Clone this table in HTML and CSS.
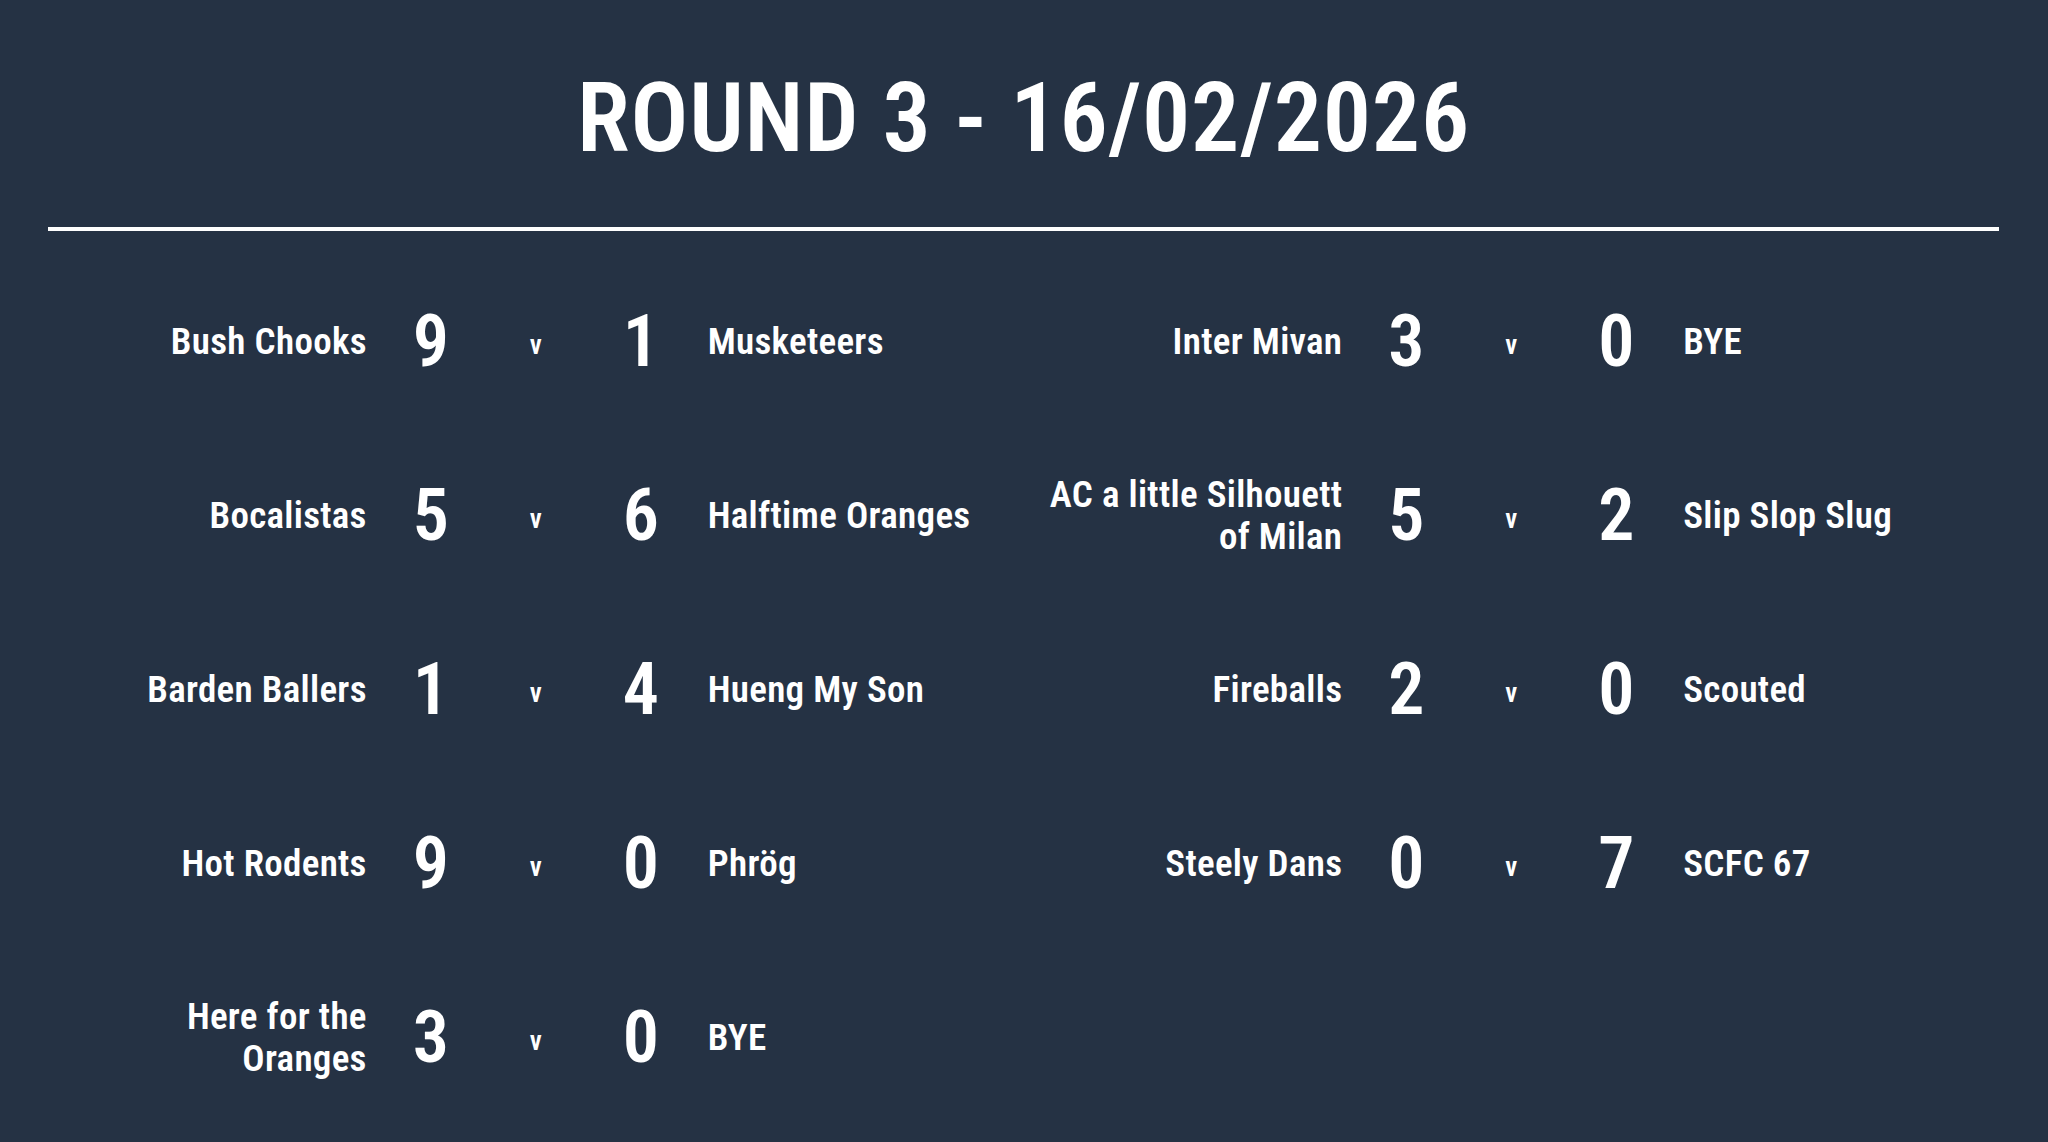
FILE: index.html
```html
<!DOCTYPE html>
<html lang="en">
<head>
<meta charset="utf-8">
<title>Round 3 - 16/02/2026</title>
<link rel="stylesheet" href="styles.css">
</head>
<body>
<main class="board">
  <h1 class="title">ROUND 3 - 16/02/2026</h1>
  <hr class="rule">
  <section class="fixtures">
    <div class="column">
      <div class="match">
        <div class="team home">Bush Chooks</div>
        <div class="score">9</div>
        <div class="vs">v</div>
        <div class="score">1</div>
        <div class="team away">Musketeers</div>
      </div>
      <div class="match">
        <div class="team home">Bocalistas</div>
        <div class="score">5</div>
        <div class="vs">v</div>
        <div class="score">6</div>
        <div class="team away">Halftime Oranges</div>
      </div>
      <div class="match">
        <div class="team home">Barden Ballers</div>
        <div class="score">1</div>
        <div class="vs">v</div>
        <div class="score">4</div>
        <div class="team away">Hueng My Son</div>
      </div>
      <div class="match">
        <div class="team home">Hot Rodents</div>
        <div class="score">9</div>
        <div class="vs">v</div>
        <div class="score">0</div>
        <div class="team away">Phrög</div>
      </div>
      <div class="match">
        <div class="team home">Here for the<br>Oranges</div>
        <div class="score">3</div>
        <div class="vs">v</div>
        <div class="score">0</div>
        <div class="team away">BYE</div>
      </div>
    </div>
    <div class="column">
      <div class="match">
        <div class="team home">Inter Mivan</div>
        <div class="score">3</div>
        <div class="vs">v</div>
        <div class="score">0</div>
        <div class="team away">BYE</div>
      </div>
      <div class="match">
        <div class="team home">AC a little Silhouett<br>of Milan</div>
        <div class="score">5</div>
        <div class="vs">v</div>
        <div class="score">2</div>
        <div class="team away">Slip Slop Slug</div>
      </div>
      <div class="match">
        <div class="team home">Fireballs</div>
        <div class="score">2</div>
        <div class="vs">v</div>
        <div class="score">0</div>
        <div class="team away">Scouted</div>
      </div>
      <div class="match">
        <div class="team home">Steely Dans</div>
        <div class="score">0</div>
        <div class="vs">v</div>
        <div class="score">7</div>
        <div class="team away">SCFC 67</div>
      </div>
    </div>
  </section>
</main>
</body>
</html>
```
FILE: styles.css
```css
html, body {
  margin: 0;
  padding: 0;
  background: #253244;
}

body {
  color: #ffffff;
  font-family: "Roboto Condensed", Roboto, "Liberation Sans", sans-serif;
  font-weight: 600;
}

.board {
  padding: 0 49px 0 48px;
}

.title {
  margin: 70px 0 0;
  font-size: 96px;
  line-height: 96px;
  font-weight: 600;
  text-align: center;
  letter-spacing: 0.8px;
}

.rule {
  margin: 61px 0 0;
  height: 4px;
  border: 0;
  background: #ffffff;
}

.fixtures {
  margin-top: 24px;
  display: grid;
  grid-template-columns: 1fr 1fr;
}

.column {
  display: flex;
  flex-direction: column;
}

.match {
  height: 174px;
  display: grid;
  grid-template-columns: 1fr 128px 82px 128px 1fr;
  align-items: center;
}

.team {
  font-size: 37px;
  line-height: 42px;
  letter-spacing: 0.3px;
}

.home {
  text-align: right;
}

.away {
  padding-left: 3px;
}

.score {
  font-size: 72px;
  line-height: 72px;
  text-align: center;
}

.vs {
  font-size: 27px;
  line-height: 42px;
  padding-top: 6px;
  text-align: center;
}
```
